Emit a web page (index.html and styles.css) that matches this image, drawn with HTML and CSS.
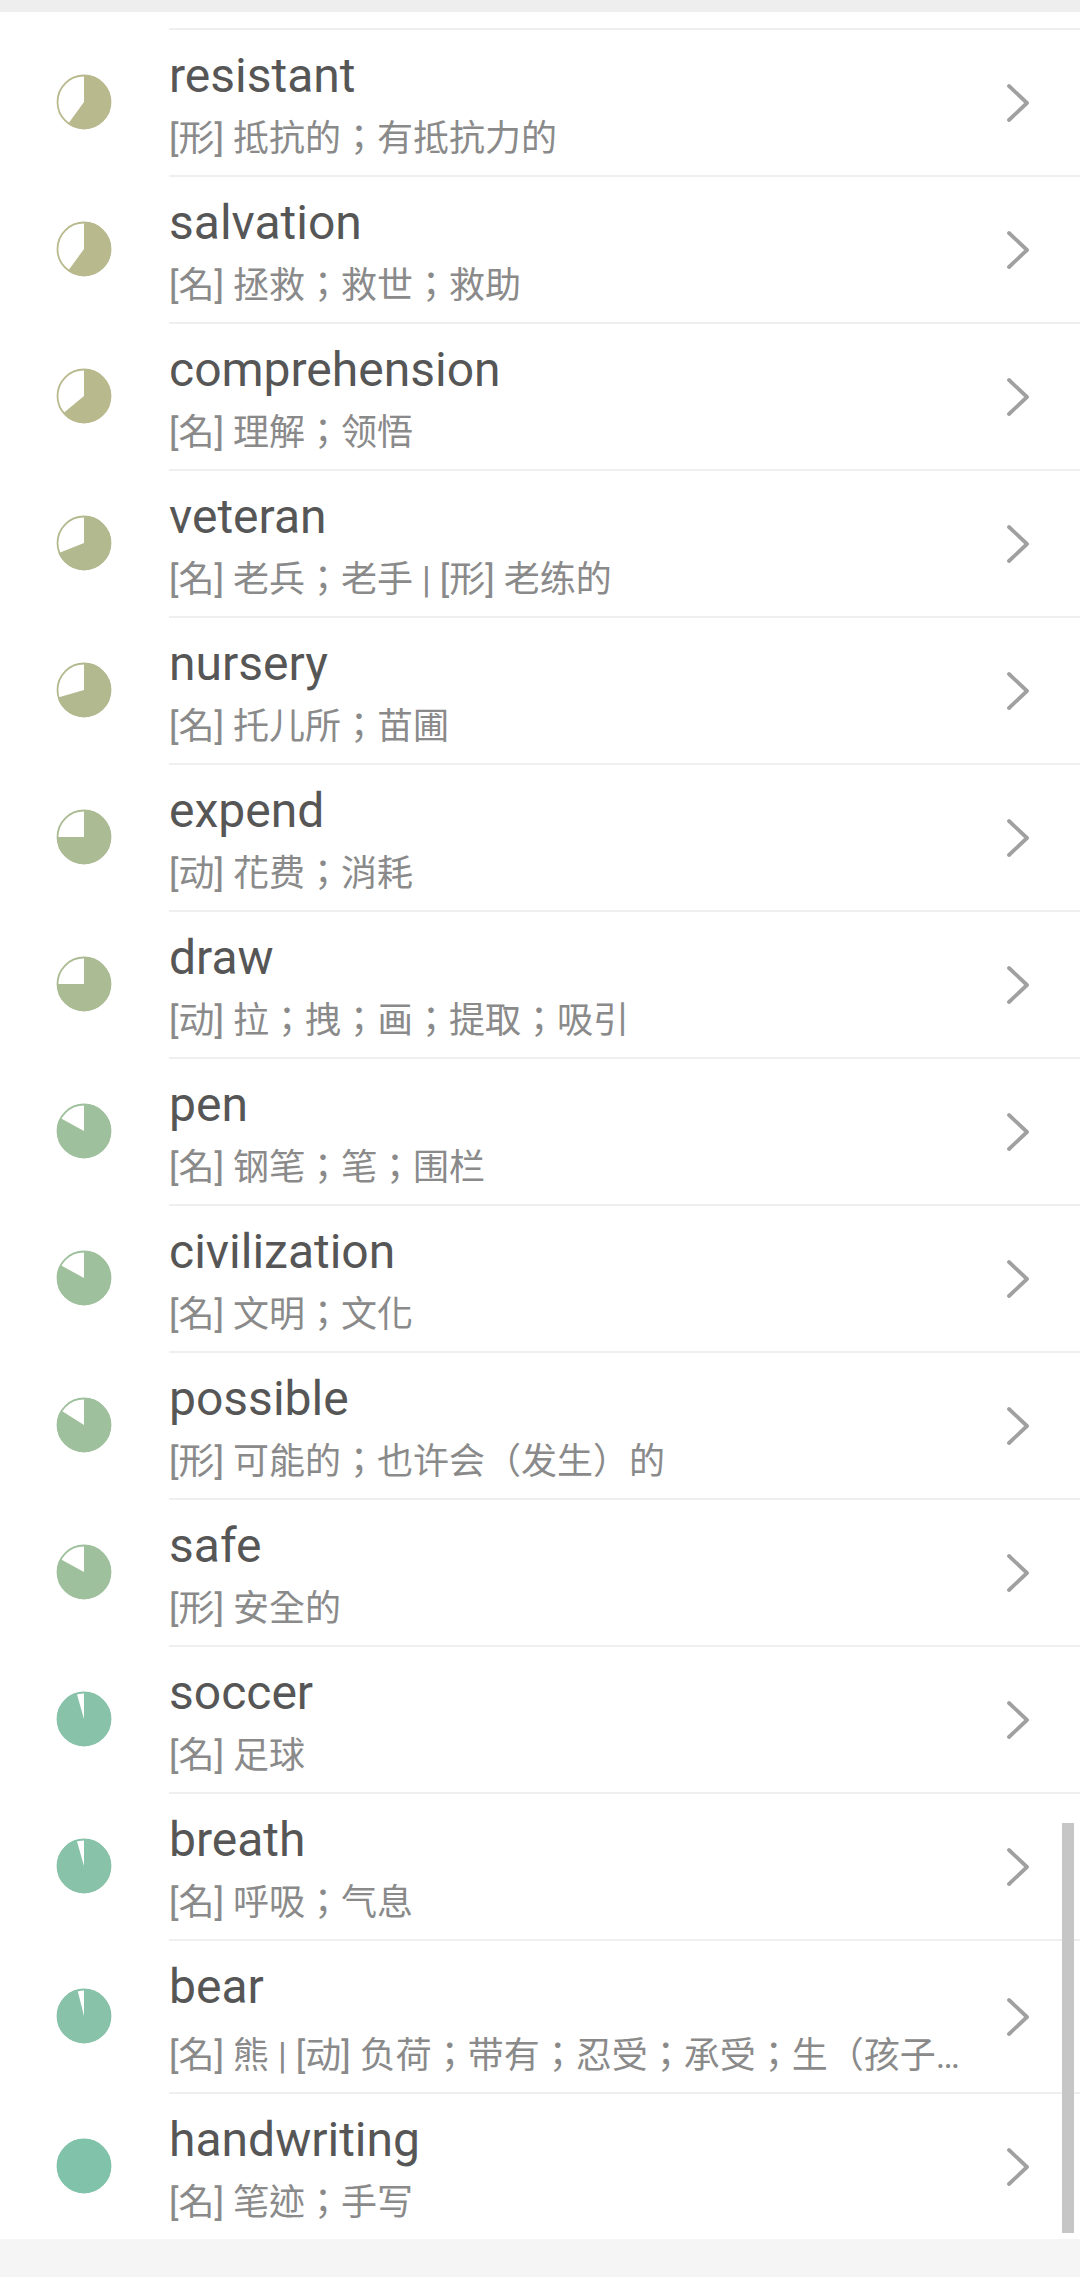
FILE: index.html
```html
<!DOCTYPE html>
<html lang="zh-CN">
<head>
  <meta charset="UTF-8" />
  <meta name="viewport" content="width=device-width, initial-scale=1" />
  <title>单词列表</title>
  <link rel="stylesheet" href="styles.css">
</head>
<body>
  <!-- Horní lišta -->
  <div class="topbar"></div>

  <!-- Seznam slov -->
  <ul class="words">
    <li class="row">
      <div class="badge lv1"><svg class="pie" viewBox="0 0 56 56"><circle cx="28" cy="28" r="26.5" class="ring"/><circle cx="28" cy="28" r="13.5" class="wedge" pathLength="100" stroke-dasharray="60 100"/></svg></div>
      <div class="body">
        <div class="text"><div class="word">resistant</div><div class="gloss">[形] 抵抗的；有抵抗力的</div></div>
        <svg class="chev" viewBox="0 0 24 40"><path d="M3 3 L21 20 L3 37"/></svg>
      </div>
    </li>
    <li class="row">
      <div class="badge lv1"><svg class="pie" viewBox="0 0 56 56"><circle cx="28" cy="28" r="26.5" class="ring"/><circle cx="28" cy="28" r="13.5" class="wedge" pathLength="100" stroke-dasharray="60 100"/></svg></div>
      <div class="body">
        <div class="text"><div class="word">salvation</div><div class="gloss">[名] 拯救；救世；救助</div></div>
        <svg class="chev" viewBox="0 0 24 40"><path d="M3 3 L21 20 L3 37"/></svg>
      </div>
    </li>
    <li class="row">
      <div class="badge lv1"><svg class="pie" viewBox="0 0 56 56"><circle cx="28" cy="28" r="26.5" class="ring"/><circle cx="28" cy="28" r="13.5" class="wedge" pathLength="100" stroke-dasharray="64 100"/></svg></div>
      <div class="body">
        <div class="text"><div class="word">comprehension</div><div class="gloss">[名] 理解；领悟</div></div>
        <svg class="chev" viewBox="0 0 24 40"><path d="M3 3 L21 20 L3 37"/></svg>
      </div>
    </li>
    <li class="row">
      <div class="badge lv2"><svg class="pie" viewBox="0 0 56 56"><circle cx="28" cy="28" r="26.5" class="ring"/><circle cx="28" cy="28" r="13.5" class="wedge" pathLength="100" stroke-dasharray="69 100"/></svg></div>
      <div class="body">
        <div class="text"><div class="word">veteran</div><div class="gloss">[名] 老兵；老手 | [形] 老练的</div></div>
        <svg class="chev" viewBox="0 0 24 40"><path d="M3 3 L21 20 L3 37"/></svg>
      </div>
    </li>
    <li class="row">
      <div class="badge lv2"><svg class="pie" viewBox="0 0 56 56"><circle cx="28" cy="28" r="26.5" class="ring"/><circle cx="28" cy="28" r="13.5" class="wedge" pathLength="100" stroke-dasharray="70.5 100"/></svg></div>
      <div class="body">
        <div class="text"><div class="word">nursery</div><div class="gloss">[名] 托儿所；苗圃</div></div>
        <svg class="chev" viewBox="0 0 24 40"><path d="M3 3 L21 20 L3 37"/></svg>
      </div>
    </li>
    <li class="row">
      <div class="badge lv3"><svg class="pie" viewBox="0 0 56 56"><circle cx="28" cy="28" r="26.5" class="ring"/><circle cx="28" cy="28" r="13.5" class="wedge" pathLength="100" stroke-dasharray="75 100"/></svg></div>
      <div class="body">
        <div class="text"><div class="word">expend</div><div class="gloss">[动] 花费；消耗</div></div>
        <svg class="chev" viewBox="0 0 24 40"><path d="M3 3 L21 20 L3 37"/></svg>
      </div>
    </li>
    <li class="row">
      <div class="badge lv3"><svg class="pie" viewBox="0 0 56 56"><circle cx="28" cy="28" r="26.5" class="ring"/><circle cx="28" cy="28" r="13.5" class="wedge" pathLength="100" stroke-dasharray="75 100"/></svg></div>
      <div class="body">
        <div class="text"><div class="word">draw</div><div class="gloss">[动] 拉；拽；画；提取；吸引</div></div>
        <svg class="chev" viewBox="0 0 24 40"><path d="M3 3 L21 20 L3 37"/></svg>
      </div>
    </li>
    <li class="row">
      <div class="badge lv4"><svg class="pie" viewBox="0 0 56 56"><circle cx="28" cy="28" r="26.5" class="ring"/><circle cx="28" cy="28" r="13.5" class="wedge" pathLength="100" stroke-dasharray="83 100"/></svg></div>
      <div class="body">
        <div class="text"><div class="word">pen</div><div class="gloss">[名] 钢笔；笔；围栏</div></div>
        <svg class="chev" viewBox="0 0 24 40"><path d="M3 3 L21 20 L3 37"/></svg>
      </div>
    </li>
    <li class="row">
      <div class="badge lv4"><svg class="pie" viewBox="0 0 56 56"><circle cx="28" cy="28" r="26.5" class="ring"/><circle cx="28" cy="28" r="13.5" class="wedge" pathLength="100" stroke-dasharray="83 100"/></svg></div>
      <div class="body">
        <div class="text"><div class="word">civilization</div><div class="gloss">[名] 文明；文化</div></div>
        <svg class="chev" viewBox="0 0 24 40"><path d="M3 3 L21 20 L3 37"/></svg>
      </div>
    </li>
    <li class="row">
      <div class="badge lv4"><svg class="pie" viewBox="0 0 56 56"><circle cx="28" cy="28" r="26.5" class="ring"/><circle cx="28" cy="28" r="13.5" class="wedge" pathLength="100" stroke-dasharray="84 100"/></svg></div>
      <div class="body">
        <div class="text"><div class="word">possible</div><div class="gloss">[形] 可能的；也许会（发生）的</div></div>
        <svg class="chev" viewBox="0 0 24 40"><path d="M3 3 L21 20 L3 37"/></svg>
      </div>
    </li>
    <li class="row">
      <div class="badge lv4"><svg class="pie" viewBox="0 0 56 56"><circle cx="28" cy="28" r="26.5" class="ring"/><circle cx="28" cy="28" r="13.5" class="wedge" pathLength="100" stroke-dasharray="83 100"/></svg></div>
      <div class="body">
        <div class="text"><div class="word">safe</div><div class="gloss">[形] 安全的</div></div>
        <svg class="chev" viewBox="0 0 24 40"><path d="M3 3 L21 20 L3 37"/></svg>
      </div>
    </li>
    <li class="row">
      <div class="badge lv5"><svg class="pie" viewBox="0 0 56 56"><circle cx="28" cy="28" r="26.5" class="ring"/><circle cx="28" cy="28" r="13.5" class="wedge" pathLength="100" stroke-dasharray="95.5 100"/></svg></div>
      <div class="body">
        <div class="text"><div class="word">soccer</div><div class="gloss">[名] 足球</div></div>
        <svg class="chev" viewBox="0 0 24 40"><path d="M3 3 L21 20 L3 37"/></svg>
      </div>
    </li>
    <li class="row">
      <div class="badge lv5"><svg class="pie" viewBox="0 0 56 56"><circle cx="28" cy="28" r="26.5" class="ring"/><circle cx="28" cy="28" r="13.5" class="wedge" pathLength="100" stroke-dasharray="95.5 100"/></svg></div>
      <div class="body">
        <div class="text"><div class="word">breath</div><div class="gloss">[名] 呼吸；气息</div></div>
        <svg class="chev" viewBox="0 0 24 40"><path d="M3 3 L21 20 L3 37"/></svg>
      </div>
    </li>
    <li class="row tall">
      <div class="badge lv5"><svg class="pie" viewBox="0 0 56 56"><circle cx="28" cy="28" r="26.5" class="ring"/><circle cx="28" cy="28" r="13.5" class="wedge" pathLength="100" stroke-dasharray="96 100"/></svg></div>
      <div class="body">
        <div class="text"><div class="word">bear</div><div class="gloss">[名] 熊 | [动] 负荷；带有；忍受；承受；生（孩子）；结（果实）</div></div>
        <svg class="chev" viewBox="0 0 24 40"><path d="M3 3 L21 20 L3 37"/></svg>
      </div>
    </li>
    <li class="row">
      <div class="badge lv6"><svg class="pie" viewBox="0 0 56 56"><circle cx="28" cy="28" r="26.5" class="ring"/><circle cx="28" cy="28" r="13.5" class="wedge" pathLength="100" stroke-dasharray="100 100"/></svg></div>
      <div class="body">
        <div class="text"><div class="word">handwriting</div><div class="gloss">[名] 笔迹；手写</div></div>
        <svg class="chev" viewBox="0 0 24 40"><path d="M3 3 L21 20 L3 37"/></svg>
      </div>
    </li>

    <!-- Posuvník přes seznam -->
    <li class="scrollbar"></li>
  </ul>
</body>
</html>
```

FILE: styles.css
```css
/* === ZÁKLAD === */
body {
  margin: 0;
  width: 1080px;
  min-height: 2277px;
  background: #f5f5f5;
  font-family: Roboto, "Noto Sans CJK TC", sans-serif;
}

.topbar {
  height: 12px;
  background: #eeeeee;
}

/* === SEZNAM === */
.words {
  position: relative;
  margin: 0;
  padding: 16px 0 0;
  list-style: none;
  background: #fff;
}

.row {
  display: flex;
  height: 147px;
}

.row.tall {
  height: 153px;
}

.row.tall .gloss {
  margin-top: 17px;
}

/* === IKONA POKROKU === */
.badge {
  width: 169px;
  flex: none;
  padding-left: 56px;
  box-sizing: border-box;
  display: flex;
  align-items: center;
}

.pie {
  width: 56px;
  height: 56px;
  display: block;
}

.pie .ring {
  fill: #fff;
  stroke: currentColor;
  stroke-width: 1.8;
}

.pie .wedge {
  fill: none;
  stroke: currentColor;
  stroke-width: 27;
  transform: rotate(-90deg);
  transform-origin: 28px 28px;
}

.lv1 { color: #b9b98e; }
.lv2 { color: #b3b98f; }
.lv3 { color: #abbb93; }
.lv4 { color: #9fc09c; }
.lv5 { color: #88c2a9; }
.lv6 { color: #81c2ab; }

/* === TEXT ŘÁDKU === */
.body {
  flex: 1;
  min-width: 0;
  display: flex;
  align-items: center;
  border-top: 2px solid #efefef;
  padding-right: 50px;
}

.text {
  flex: 1;
  min-width: 0;
  align-self: flex-start;
  padding-top: 18px;
}

.word {
  font-size: 48px;
  line-height: 56px;
  color: #565656;
  white-space: nowrap;
}

.gloss {
  margin-top: 11px;
  font-size: 36px;
  line-height: 48px;
  color: #8a8a8a;
  white-space: nowrap;
  overflow: hidden;
  text-overflow: ellipsis;
  /* středová interpunkce jako v originále */
  font-feature-settings: "locl" 0;
}

.chev {
  width: 24px;
  height: 40px;
  flex: none;
  margin-left: 40px;
}

.chev path {
  fill: none;
  stroke: #a0a0a0;
  stroke-width: 3.8;
  stroke-linecap: round;
  stroke-linejoin: round;
}

/* === POSUVNÍK === */
.scrollbar {
  position: absolute;
  top: 1811px;
  right: 6px;
  width: 12px;
  height: 410px;
  background: #c6c6c6;
}
```
